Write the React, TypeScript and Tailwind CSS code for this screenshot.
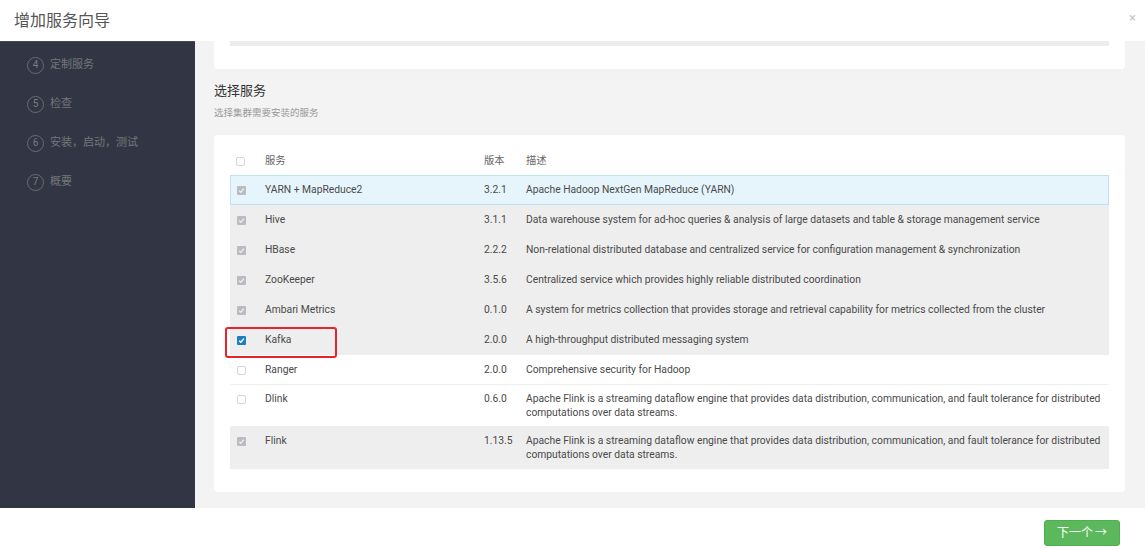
import React from "react";

type Svc = {
  name: string;
  version: string;
  desc: string;
  state: "locked" | "checked" | "off";
  tone: "blue" | "gray" | "white";
  wrap?: boolean;
};

const services: Svc[] = [
  { name: "YARN + MapReduce2", version: "3.2.1", desc: "Apache Hadoop NextGen MapReduce (YARN)", state: "locked", tone: "blue" },
  { name: "Hive", version: "3.1.1", desc: "Data warehouse system for ad-hoc queries & analysis of large datasets and table & storage management service", state: "locked", tone: "gray" },
  { name: "HBase", version: "2.2.2", desc: "Non-relational distributed database and centralized service for configuration management & synchronization", state: "locked", tone: "gray" },
  { name: "ZooKeeper", version: "3.5.6", desc: "Centralized service which provides highly reliable distributed coordination", state: "locked", tone: "gray" },
  { name: "Ambari Metrics", version: "0.1.0", desc: "A system for metrics collection that provides storage and retrieval capability for metrics collected from the cluster", state: "locked", tone: "gray" },
  { name: "Kafka", version: "2.0.0", desc: "A high-throughput distributed messaging system", state: "checked", tone: "gray" },
  { name: "Ranger", version: "2.0.0", desc: "Comprehensive security for Hadoop", state: "off", tone: "white" },
  { name: "Dlink", version: "0.6.0", desc: "Apache Flink is a streaming dataflow engine that provides data distribution, communication, and fault tolerance for distributed computations over data streams.", state: "off", tone: "white", wrap: true },
  { name: "Flink", version: "1.13.5", desc: "Apache Flink is a streaming dataflow engine that provides data distribution, communication, and fault tolerance for distributed computations over data streams.", state: "locked", tone: "gray", wrap: true },
];

const steps = [
  { n: 4, label: "定制服务" },
  { n: 5, label: "检查" },
  { n: 6, label: "安装，启动，测试" },
  { n: 7, label: "概要" },
];

function Box({ state }: { state: Svc["state"] | "off" }) {
  if (state === "off") {
    return <span className="block w-[9px] h-[9px] rounded-[2px] border border-[#d6d6d6] bg-white" />;
  }
  const blue = state === "checked";
  return (
    <span className={`flex items-center justify-center w-[9px] h-[9px] rounded-[1px] ${blue ? "bg-[#1c7fc4]" : "bg-[#b9bcc0]"}`}>
      <svg width="7" height="7" viewBox="0 0 8 8">
        <path d="M1.3 4.2 L3.2 6 L6.8 1.8" fill="none" stroke={blue ? "#ffffff" : "#eeeeee"} strokeWidth="1.5" />
      </svg>
    </span>
  );
}

export default function App() {
  const font = "font-['Roboto','Noto_Sans_CJK_SC',sans-serif]";
  return (
    <div className={`w-[1145px] h-[549px] flex flex-col bg-white ${font} overflow-hidden`}>
      {/* header */}
      <div className="h-[41px] shrink-0 flex items-center justify-between pl-[14px] pr-[9px]">
        <h1 className="text-[16px] text-[#555] leading-none">增加服务向导</h1>
        <span className="text-[13px] text-[#c4c4c4] leading-none mb-[6px]">×</span>
      </div>

      <div className="flex flex-1 min-h-0">
        {/* steps */}
        <div className="w-[195px] shrink-0 bg-[#323544] border-t border-[#45495a] pt-[14px] pl-[27px] flex flex-col gap-[21px]">
          {steps.map((s) => (
            <div key={s.n} className="flex items-center gap-[6px] h-[18px]">
              <span className="w-[17px] h-[17px] rounded-full border border-[#6b6c70] text-[#7a7b7f] text-[10px] flex items-center justify-center leading-none">
                {s.n}
              </span>
              <span className="text-[11px] text-[#74757a]">{s.label}</span>
            </div>
          ))}
        </div>

        {/* content */}
        <div className="flex-1 bg-[#f3f3f3] pl-[19px] pr-[20px]">
          <div className="h-[28px] bg-white rounded-b-[4px] px-[16px]">
            <div className="h-[5px] bg-[#ececec]" />
          </div>

          <div className="pt-[14px]">
            <h2 className="text-[13px] text-[#333] leading-[16px]">选择服务</h2>
            <p className="text-[9.5px] text-[#999] leading-[12px] mt-[8px]">选择集群需要安装的服务</p>
          </div>

          <div className="mt-[16px] bg-white rounded-[4px] px-[16px] pt-[16px] pb-[23px] text-[10.3px] text-[#4a4a4a]">
            <div className="grid grid-cols-[28px_219px_42px_1fr] leading-[14px] pt-[3px] pb-[7px] text-[#666] items-center">
              <span className="pl-[6px]"><Box state="off" /></span>
              <span className="pl-[7px]">服务</span>
              <span className="pl-[7px]">版本</span>
              <span className="pl-[7px]">描述</span>
            </div>
            {services.map((s) => (
              <div
                key={s.name}
                className={`relative grid grid-cols-[28px_219px_42px_1fr] leading-[14px] border ${s.wrap ? "py-[6px]" : "py-[7px]"} ${
                  s.tone === "blue"
                    ? "bg-[#e6f5fc] border-[#bfe2f3]"
                    : s.tone === "gray"
                    ? "bg-[#eeeeee] border-transparent border-b-[#eeeeee]"
                    : "bg-white border-transparent border-b-[#eeeeee]"
                }`}
              >
                <span className="pl-[6px] pt-[3px]"><Box state={s.state} /></span>
                <span className="pl-[6px]">{s.name}</span>
                <span className="pl-[6px]">{s.version}</span>
                <span className="pl-[6px] pr-[6px]">{s.desc}</span>
                {s.name === "Kafka" && (
                  <span className="absolute z-10 left-[-6px] top-[1px] w-[112px] h-[31px] border-2 border-[#e8232a] rounded-[3px]" />
                )}
              </div>
            ))}
          </div>
        </div>
      </div>

      {/* footer */}
      <div className="h-[41px] shrink-0 flex items-start justify-end pt-[12px] pr-[25px]">
        <button className="w-[76px] h-[26px] rounded-[3px] bg-[#5cb85c] border border-[#4fae4f] text-white text-[12px] flex items-center justify-center gap-[2px]">
          下一个<span className="text-[12px]">→</span>
        </button>
      </div>
    </div>
  );
}
